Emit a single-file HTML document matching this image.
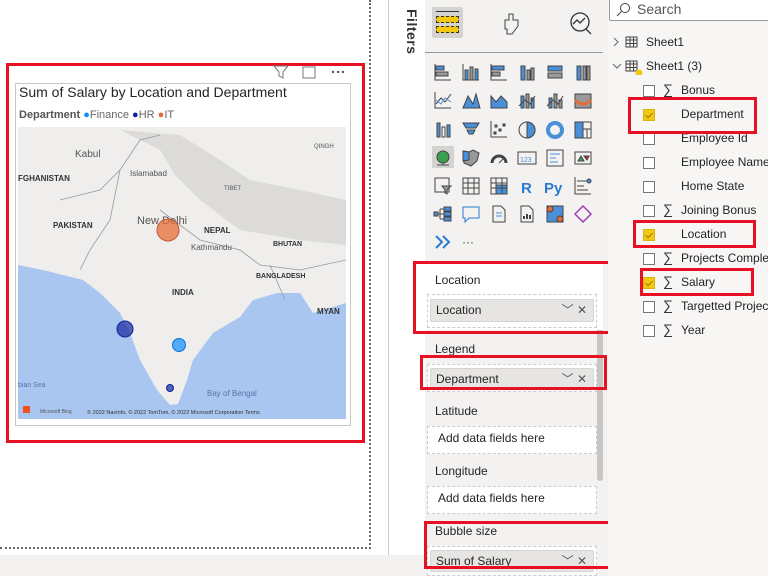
<!DOCTYPE html>
<html><head><meta charset="utf-8"><style>
*{margin:0;padding:0;box-sizing:border-box}
body{width:768px;height:576px;overflow:hidden;position:relative;background:#fff;font-family:"Segoe UI","Liberation Sans",sans-serif;color:#252423}
.a{position:absolute}
.red{position:absolute;border:3px solid #e81123}
.t{position:absolute;font-size:12px;white-space:nowrap}
.cb{position:absolute;width:12px;height:12px;border:1px solid #777;background:#fff}
.cbo{background:#f2c811;border-color:#d9b20c}
.cbo::after{content:"";position:absolute;left:3px;top:1px;width:3px;height:6px;border:solid #9a7d00;border-width:0 1px 1px 0;transform:rotate(45deg)}
.sg{position:absolute;font-size:14px;color:#333}
.pill{position:absolute;background:#e6e5e3;border:1px solid #d6d5d3;border-radius:2px;font-size:12px}
.well{position:absolute;border:1px dashed #ccc;background:#fff}
</style></head><body>
<div class="a" style="left:0;top:0;width:371px;height:549px;border-right:2px dotted #666;border-bottom:2px dotted #666"></div>
<div class="a" style="left:0;top:555px;width:425px;height:21px;background:#f3f2f1"></div>
<div class="a" style="left:388px;top:0;width:1px;height:555px;background:#ccc"></div>
<div class="a" style="left:405px;top:9px;transform-origin:0 0;transform:rotate(90deg) translate(0,-15px);font-size:14px;font-weight:bold;color:#333;letter-spacing:0.5px">Filters</div>
<div class="red" style="left:6px;top:63px;width:359px;height:380px"></div>
<div class="a" style="left:15px;top:83px;width:336px;height:343px;border:1px solid #c8c8c8"></div>
<svg class="a" style="left:270px;top:64px" width="80" height="16"><path d="M4 2h14l-5 6v6l-4-2v-4z" fill="none" stroke="#777"/><rect x="33" y="3" width="12" height="11" fill="none" stroke="#777"/><circle cx="63" cy="8" r="1.2" fill="#555"/><circle cx="68" cy="8" r="1.2" fill="#555"/><circle cx="73" cy="8" r="1.2" fill="#555"/></svg>
<div class="t" style="left:19px;top:84px;font-size:14px;color:#252423">Sum of Salary by Location and Department</div>
<div class="t" style="left:19px;top:109px;font-size:11px"><b style="color:#555">Department</b> <span style="color:#118dff">●</span><span style="color:#666">Finance</span> <span style="color:#12239e">●</span><span style="color:#666">HR</span> <span style="color:#e66c37">●</span><span style="color:#666">IT</span></div>
<svg class="a" style="left:18px;top:127px" width="328" height="292" viewBox="18 127 328 292">
<rect x="18" y="127" width="328" height="292" fill="#efeeec"/>
<path d="M120 130 L160 150 L175 175 L200 200 L240 230 L300 240 L346 245 L346 200 L300 190 L250 180 L220 160 L180 135 Z" fill="#dcdbd9"/>
<path d="M18 265 L43 270 L83 280 L100 293 L120 313 L130 333 L140 360 L157 390 L170 405 L178 404 L187 380 L193 360 L213 333 L240 317 L253 300 L277 293 L300 293 L313 313 L346 303 L346 419 L18 419 Z" fill="#a8c6ef"/>
<g fill="none" stroke="#999" stroke-width="0.8"><path d="M60 200 L100 190 L120 170 L140 140 L160 135"/><path d="M120 170 L110 220 L90 250 L80 270"/><path d="M160 210 L200 240 L240 250 L260 265 L300 270 L346 260"/><path d="M270 265 L285 300"/></g>
<g font-family="Liberation Sans" fill="#555"><text x="75" y="157" font-size="10">Kabul</text><text x="130" y="176" font-size="8">Islamabad</text><text x="18" y="181" font-size="8" font-weight="bold" fill="#333">FGHANISTAN</text><text x="224" y="190" font-size="6">TIBET</text><text x="314" y="148" font-size="6">QINGH</text><text x="53" y="228" font-size="8" font-weight="bold" fill="#333">PAKISTAN</text><text x="137" y="224" font-size="11">New Delhi</text><text x="204" y="233" font-size="8" font-weight="bold" fill="#333">NEPAL</text><text x="191" y="250" font-size="8">Kathmandu</text><text x="273" y="246" font-size="7" font-weight="bold" fill="#333">BHUTAN</text><text x="256" y="278" font-size="7" font-weight="bold" fill="#333">BANGLADESH</text><text x="172" y="295" font-size="8" font-weight="bold" fill="#333">INDIA</text><text x="317" y="314" font-size="8" font-weight="bold" fill="#333">MYAN</text><text x="207" y="396" font-size="8" fill="#5577aa">Bay of Bengal</text><text x="18" y="387" font-size="7" fill="#5577aa">bian Sea</text><text x="40" y="413" font-size="5">Microsoft Bing</text><text x="87" y="414" font-size="5.5" fill="#333">© 2022 NavInfo, © 2022 TomTom, © 2022 Microsoft Corporation  Terms</text></g>
<rect x="23" y="406" width="7" height="7" fill="#f25022"/>
<circle cx="168" cy="230" r="11" fill="#e66c37" fill-opacity=".75" stroke="#c55a2e"/>
<circle cx="125" cy="329" r="8" fill="#12239e" fill-opacity=".7" stroke="#12239e"/>
<circle cx="179" cy="345" r="6.5" fill="#118dff" fill-opacity=".7" stroke="#0a6fd0"/>
<circle cx="170" cy="388" r="3.5" fill="#12239e" fill-opacity=".7" stroke="#12239e"/>
</svg>
<div class="a" style="left:425px;top:0;width:183px;height:576px;background:#f3f2f1"></div>
<div class="a" style="left:432px;top:7px;width:31px;height:31px;background:#d4d3d2;border-radius:2px"></div>
<div class="a" style="left:436px;top:11px;width:23px;height:1px;background:#333"></div>
<div class="a" style="left:436px;top:16px;width:23px;height:7px;background:#f2c811;border:1px dashed #333"></div>
<div class="a" style="left:436px;top:26px;width:23px;height:7px;background:#f2c811;border:1px dashed #333"></div>
<svg class="a" style="left:500px;top:10px" width="100" height="28"><path d="M5 10h4v-6h4v6h5v6l-6 8h-5v-5h-2z" fill="none" stroke="#444"/><circle cx="80" cy="12" r="9" fill="none" stroke="#333" stroke-width="1.3"/><path d="M73 14l4-4 3 3 5-5M86 19l5 5" stroke="#333" stroke-width="1.3" fill="none"/></svg>
<div class="a" style="left:425px;top:52px;width:178px;height:1px;background:#999"></div>
<svg class="a" style="left:432px;top:60px" width="170" height="194">
<g stroke="#444" fill="#4a90d9" stroke-width="1">
<g transform="translate(2,4)"><rect x="2" y="2" width="8" height="4"/><rect x="2" y="8" width="12" height="4" fill="#999"/><path d="M1 0v16h16" fill="none"/></g>
<g transform="translate(30,4)"><rect x="3" y="6" width="3" height="10"/><rect x="8" y="3" width="3" height="13" fill="#999"/><rect x="13" y="5" width="3" height="11"/><path d="M1 0v16h16" fill="none"/></g>
<g transform="translate(58,4)"><rect x="2" y="2" width="12" height="4"/><rect x="2" y="8" width="8" height="4" fill="#999"/><path d="M1 0v16h16" fill="none"/></g>
<g transform="translate(86,4)"><rect x="3" y="2" width="4" height="14"/><rect x="9" y="6" width="3" height="10" fill="#999"/><rect x="13" y="4" width="3" height="12" fill="#999"/></g>
<g transform="translate(114,4)"><rect x="2" y="2" width="14" height="5"/><rect x="2" y="9" width="14" height="5" fill="#999"/></g>
<g transform="translate(142,4)"><rect x="3" y="2" width="4" height="14"/><rect x="9" y="2" width="3" height="14" fill="#999"/><rect x="13" y="2" width="3" height="14" fill="#999"/></g>
</g>
<g stroke="#444" fill="none">
<g transform="translate(2,32)"><path d="M1 0v16h16M2 12l5-6 4 4 6-8"/><path d="M2 8l5 4 4-6 6 4" stroke="#4a90d9"/></g>
<g transform="translate(30,32)"><path d="M1 16l5-12 5 8 3-10 4 14z" fill="#4a90d9"/></g>
<g transform="translate(58,32)"><path d="M1 4l5 6 5-6 6 6v6H1z" fill="#4a90d9"/></g>
<g transform="translate(86,32)"><rect x="3" y="4" width="3" height="12" fill="#4a90d9"/><rect x="8" y="2" width="3" height="14" fill="#999"/><rect x="13" y="6" width="3" height="10" fill="#4a90d9"/><path d="M1 14l6-6 5 4 5-8"/></g>
<g transform="translate(114,32)"><rect x="3" y="6" width="3" height="10" fill="#4a90d9"/><rect x="8" y="2" width="3" height="14" fill="#999"/><rect x="13" y="8" width="3" height="8" fill="#999"/><path d="M1 14l6-6 5 4 5-8"/></g>
<g transform="translate(142,32)"><path d="M1 2h16v14H1z" fill="#999"/><path d="M1 8q8 8 16 0" stroke="#e66c37" stroke-width="3"/></g>
</g>
<g stroke="#444" fill="none">
<g transform="translate(2,61)"><rect x="3" y="2" width="3" height="14" fill="#4a90d9"/><rect x="8" y="6" width="3" height="10"/><rect x="13" y="4" width="3" height="12" fill="#4a90d9"/></g>
<g transform="translate(30,61)"><path d="M1 2h16l-3 5H4zM5 9h8l-2 4H7z" fill="#4a90d9"/></g>
<g transform="translate(58,61)"><path d="M1 0v16h16"/><rect x="5" y="4" width="2" height="2" fill="#4a90d9"/><rect x="9" y="8" width="2" height="2" fill="#444"/><rect x="13" y="3" width="2" height="2" fill="#444"/><rect x="4" y="11" width="2" height="2" fill="#444"/></g>
<g transform="translate(86,61)"><circle cx="9" cy="9" r="8"/><path d="M9 1a8 8 0 0 1 0 16V9z" fill="#4a90d9"/></g>
<g transform="translate(114,61)"><circle cx="9" cy="9" r="7" stroke="#4a90d9" stroke-width="4"/></g>
<g transform="translate(142,61)"><rect x="1" y="1" width="16" height="16"/><rect x="1" y="1" width="8" height="16" fill="#4a90d9"/><path d="M9 8h8M13 8v9"/></g>
</g>
<rect x="0" y="86" width="22" height="22" fill="#d4d3d2"/>
<g stroke="#444" fill="none">
<g transform="translate(2,89)"><circle cx="9" cy="8" r="6" fill="#3aa14f"/><path d="M3 16h12M9 14v2"/></g>
<g transform="translate(30,89)"><path d="M1 2l6 1 4-2 6 3-2 8-6 5-7-3z" fill="#999"/><path d="M1 2l6 1 0 8-6 1z" fill="#4a90d9"/></g>
<g transform="translate(58,89)"><path d="M2 14a7 7 0 0 1 14 0" stroke-width="3"/><path d="M9 14l4-4"/></g>
<g transform="translate(86,89)"><rect x="0" y="3" width="18" height="12"/><text x="2" y="13" font-size="7" fill="#4a90d9" stroke="none" font-family="Liberation Sans">123</text></g>
<g transform="translate(114,89)"><rect x="1" y="1" width="16" height="16"/><path d="M4 5h10M4 9h6M4 13h8" stroke="#4a90d9"/></g>
<g transform="translate(142,89)"><rect x="1" y="3" width="16" height="12"/><path d="M4 12l3-5 3 5z" fill="#3aa14f"/><path d="M10 7h5l-2 4z" fill="#e81123"/></g>
</g>
<g stroke="#444" fill="none">
<g transform="translate(2,117)"><rect x="1" y="1" width="14" height="14"/><path d="M8 9h9l-4 4v4l-2-1v-3z" fill="#999"/></g>
<g transform="translate(30,117)"><rect x="1" y="1" width="16" height="16"/><path d="M1 6h16M1 11h16M6 1v16M12 1v16"/></g>
<g transform="translate(58,117)"><rect x="1" y="1" width="16" height="16"/><rect x="6" y="8" width="11" height="9" fill="#4a90d9"/><path d="M1 6h16M1 11h16M6 1v16M12 1v16"/></g>
<text x="89" y="133" font-size="15" font-weight="bold" fill="#2b7bd0" stroke="none" font-family="Liberation Sans">R</text>
<text x="112" y="133" font-size="15" font-weight="bold" fill="#2b7bd0" stroke="none" font-family="Liberation Sans">Py</text>
<g transform="translate(142,117)"><path d="M1 0v17h16M3 4h10M3 9h7M3 13h11"/><circle cx="15" cy="4" r="2" fill="#4a90d9"/></g>
</g>
<g stroke="#444" fill="none">
<g transform="translate(2,145)"><path d="M1 9h5M6 4v10M6 4h4M6 9h4M6 14h4"/><rect x="10" y="2" width="7" height="4" fill="#4a90d9"/><rect x="10" y="7" width="7" height="4" fill="#4a90d9"/><rect x="10" y="12" width="7" height="4" fill="#4a90d9"/><rect x="0" y="7" width="4" height="4" fill="#4a90d9"/></g>
<g transform="translate(30,145)"><path d="M1 2h16v11H7l-4 4v-4H1z" stroke="#2b7bd0"/></g>
<g transform="translate(58,145)"><path d="M3 1h8l4 4v12H3z"/><path d="M6 8h6M6 11h6" stroke="#4a90d9"/></g>
<g transform="translate(86,145)"><path d="M3 1h8l4 4v12H3z"/><path d="M6 14v-3M9 14v-5M12 14v-4" stroke-width="2"/></g>
<g transform="translate(114,145)"><rect x="1" y="1" width="16" height="16" fill="#4a90d9"/><circle cx="4" cy="4" r="3" fill="#e66c37"/><circle cx="14" cy="14" r="3" fill="#e66c37"/></g>
<g transform="translate(142,145)"><path d="M9 1l8 8-8 8-8-8z" stroke="#a23bb5" stroke-width="1.5"/></g>
</g>
<g transform="translate(2,173)" fill="none" stroke="#2b7bd0" stroke-width="2"><path d="M2 3l6 6-6 6M9 3l6 6-6 6"/></g>
<text x="30" y="186" font-size="12" fill="#444">···</text>
</svg>
<div class="a" style="left:597px;top:266px;width:6px;height:215px;background:#c8c6c4;border-radius:3px"></div>
<div class="a" style="left:419px;top:262px;width:184px;height:68px;background:#fff"></div>
<div class="t" style="left:435px;top:273px">Location</div>
<div class="well" style="left:427px;top:294px;width:170px;height:34px"></div>
<div class="pill" style="left:430px;top:299px;width:164px;height:23px;padding:3px 5px">Location<span style="position:absolute;right:6px;top:1px;color:#555">﹀ ✕</span></div>
<div class="red" style="left:413px;top:261px;width:201px;height:73px"></div>
<div class="t" style="left:435px;top:342px">Legend</div>
<div class="well" style="left:427px;top:364px;width:170px;height:28px"></div>
<div class="pill" style="left:430px;top:368px;width:164px;height:22px;padding:3px 5px">Department<span style="position:absolute;right:6px;top:1px;color:#555">﹀ ✕</span></div>
<div class="red" style="left:420px;top:355px;width:187px;height:35px"></div>
<div class="t" style="left:435px;top:404px">Latitude</div>
<div class="well" style="left:427px;top:426px;width:170px;height:28px"></div>
<div class="t" style="left:438px;top:431px">Add data fields here</div>
<div class="t" style="left:435px;top:464px">Longitude</div>
<div class="well" style="left:427px;top:486px;width:170px;height:28px"></div>
<div class="t" style="left:438px;top:491px">Add data fields here</div>
<div class="t" style="left:435px;top:524px">Bubble size</div>
<div class="well" style="left:427px;top:546px;width:170px;height:30px"></div>
<div class="pill" style="left:430px;top:550px;width:164px;height:22px;padding:3px 5px">Sum of Salary<span style="position:absolute;right:6px;top:1px;color:#555">﹀ ✕</span></div>
<div class="red" style="left:424px;top:521px;width:189px;height:48px"></div>
<div class="a" style="left:608px;top:0;width:160px;height:576px;background:#f7f6f5"></div>
<div class="a" style="left:609px;top:-1px;width:162px;height:22px;background:#fff;border:1px solid #999;border-radius:2px"></div>
<svg class="a" style="left:615px;top:2px" width="16" height="16"><circle cx="10" cy="6" r="4.5" fill="none" stroke="#444"/><path d="M6.5 9.5L2 14" stroke="#444"/></svg>
<div class="t" style="left:637px;top:1px;font-size:14px;color:#555">Search</div>
<svg class="a" style="left:612px;top:35px" width="40" height="40"><path d="M2 3l4 4-4 4" fill="none" stroke="#666"/><rect x="14" y="2" width="11" height="10" fill="none" stroke="#444"/><path d="M14 5h11M14 8.5h11M18 2v10M21.5 2v10" stroke="#444"/><path d="M1 29l4 4 4-4" fill="none" stroke="#666"/><rect x="14" y="26" width="11" height="10" fill="none" stroke="#444"/><path d="M14 29h11M14 32.5h11M18 26v10M21.5 26v10" stroke="#444"/><circle cx="27" cy="38" r="3.5" fill="#f2c811"/></svg>
<div class="t" style="left:646px;top:35px">Sheet1</div>
<div class="t" style="left:646px;top:59px">Sheet1 (3)</div>
<div class="cb" style="left:643px;top:85px"></div><div class="sg" style="left:663px;top:81px">∑</div><div class="t" style="left:681px;top:83px">Bonus</div>
<div class="cb cbo" style="left:643px;top:109px"></div><div class="t" style="left:681px;top:107px">Department</div>
<div class="cb" style="left:643px;top:133px"></div><div class="t" style="left:681px;top:131px">Employee Id</div>
<div class="cb" style="left:643px;top:157px"></div><div class="t" style="left:681px;top:155px">Employee Name</div>
<div class="cb" style="left:643px;top:181px"></div><div class="t" style="left:681px;top:179px">Home State</div>
<div class="cb" style="left:643px;top:205px"></div><div class="sg" style="left:663px;top:201px">∑</div><div class="t" style="left:681px;top:203px">Joining Bonus</div>
<div class="cb cbo" style="left:643px;top:229px"></div><div class="t" style="left:681px;top:227px">Location</div>
<div class="cb" style="left:643px;top:253px"></div><div class="sg" style="left:663px;top:249px">∑</div><div class="t" style="left:681px;top:251px">Projects Completed</div>
<div class="cb cbo" style="left:643px;top:277px"></div><div class="sg" style="left:663px;top:273px">∑</div><div class="t" style="left:681px;top:275px">Salary</div>
<div class="cb" style="left:643px;top:301px"></div><div class="sg" style="left:663px;top:297px">∑</div><div class="t" style="left:681px;top:299px">Targetted Projects</div>
<div class="cb" style="left:643px;top:325px"></div><div class="sg" style="left:663px;top:321px">∑</div><div class="t" style="left:681px;top:323px">Year</div>
<div class="red" style="left:628px;top:97px;width:129px;height:37px"></div>
<div class="red" style="left:633px;top:220px;width:123px;height:28px"></div>
<div class="red" style="left:640px;top:268px;width:114px;height:28px"></div>
</body></html>
